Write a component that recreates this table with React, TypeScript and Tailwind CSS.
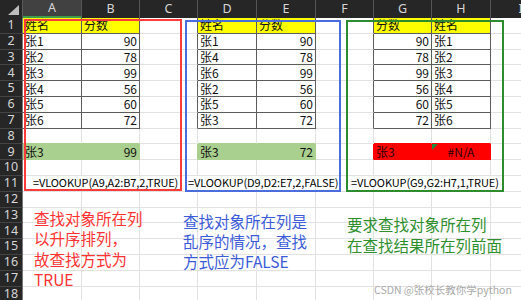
import React from 'react';

const W = ['w-[23px]', 'w-[59px]', 'w-[58px]', 'w-[58px]', 'w-[59px]', 'w-[59px]', 'w-[58px]', 'w-[58px]', 'w-[59px]', 'w-[60px]'];
const LET = ['A', 'B', 'C', 'D', 'E', 'F', 'G', 'H', 'I'];

type Fill = 'y' | 'g' | 'r';
type Cell = { t: string; a: 'l' | 'r' | 'c'; f?: Fill };
const cells: Record<string, Cell> = {};
function put(c: number, r: number, t: string, a: 'l' | 'r' | 'c' = 'l', f?: Fill) {
  cells[`${c}-${r}`] = { t, a, f };
}

put(1, 1, '姓名', 'l', 'y');
put(2, 1, '分数', 'l', 'y');
[['张1', '90'], ['张2', '78'], ['张3', '99'], ['张4', '56'], ['张5', '60'], ['张6', '72']].forEach(([n, v], i) => {
  put(1, i + 2, n);
  put(2, i + 2, v, 'r');
});
put(4, 1, '姓名', 'l', 'y');
put(5, 1, '分数', 'l', 'y');
[['张1', '90'], ['张4', '78'], ['张6', '99'], ['张2', '56'], ['张5', '60'], ['张3', '72']].forEach(([n, v], i) => {
  put(4, i + 2, n);
  put(5, i + 2, v, 'r');
});
put(7, 1, '分数', 'l', 'y');
put(8, 1, '姓名', 'l', 'y');
[['90', '张1'], ['78', '张2'], ['99', '张3'], ['56', '张4'], ['60', '张5'], ['72', '张6']].forEach(([v, n], i) => {
  put(7, i + 2, v, 'r');
  put(8, i + 2, n);
});
put(1, 9, '张3', 'l', 'g');
put(2, 9, '99', 'r', 'g');
put(4, 9, '张3', 'l', 'g');
put(5, 9, '72', 'r', 'g');
put(7, 9, '张3', 'l', 'r');
put(8, 9, '#N/A', 'c', 'r');

const TABLE_COLS = [1, 2, 4, 5, 7, 8];
const isTable = (c: number, r: number) => r >= 1 && r <= 7 && TABLE_COLS.includes(c);
const fillOf = (c: number, r: number): Fill | undefined => cells[`${c}-${r}`]?.f;

const FILL_BG: Record<Fill, string> = { y: 'bg-[#ffff00]', g: 'bg-[#a9d08e]', r: 'bg-[#ff0000]' };
const FILL_R: Record<Fill, string> = { y: 'border-r-[#ffff00]', g: 'border-r-[#a9d08e]', r: 'border-r-[#ff0000]' };
const FILL_B: Record<Fill, string> = { y: 'border-b-[#ffff00]', g: 'border-b-[#a9d08e]', r: 'border-b-[#ff0000]' };

function rightBorder(c: number, r: number) {
  if (isTable(c, r) || isTable(c + 1, r)) return 'border-r-[#5c5c5c]';
  const f = fillOf(c, r) || fillOf(c + 1, r);
  if (f) return FILL_R[f];
  return 'border-r-[#e2e2e2]';
}
function bottomBorder(c: number, r: number) {
  if (isTable(c, r) || isTable(c, r + 1)) return 'border-b-[#5c5c5c]';
  const f = fillOf(c, r) || fillOf(c, r + 1);
  if (f) return FILL_B[f];
  return 'border-b-[#e2e2e2]';
}

const CJK = "font-['Noto_Sans_CJK_SC','Noto_Sans',sans-serif]";

function Extra({ c, r }: { c: number; r: number }) {
  if (r === 11 && c === 1)
    return <span className="relative z-10 mb-[2px] ml-[8px] shrink-0 whitespace-nowrap bg-white text-[11px] leading-[12px] tracking-[-0.1px] text-black">=VLOOKUP(A9,A2:B7,2,TRUE)</span>;
  if (r === 11 && c === 3)
    return <span className="relative z-10 mb-[2px] ml-[46px] shrink-0 whitespace-nowrap bg-white text-[11px] leading-[12px] tracking-[-0.1px] text-black">=VLOOKUP(D9,D2:E7,2,FALSE)</span>;
  if (r === 11 && c === 6)
    return <span className="relative z-10 mb-[2px] ml-[33px] shrink-0 whitespace-nowrap bg-white text-[11px] leading-[12px] tracking-[-0.1px] text-black">=VLOOKUP(G9,G2:H7,1,TRUE)</span>;
  if (r === 13 && c === 1)
    return (
      <div className="relative z-10 shrink-0 self-start whitespace-nowrap pl-[9px] pt-[0px] text-[15.5px] leading-[20.5px] text-[#ff3333]">
        <div>查找对象所在列</div>
        <div>以升序排列，</div>
        <div>故查找方式为</div>
        <div>TRUE</div>
      </div>
    );
  if (r === 13 && c === 3)
    return (
      <div className="relative z-10 shrink-0 self-start whitespace-nowrap pl-[41px] pt-[3px] text-[15.5px] leading-[20px] text-[#3b5bd9]">
        <div>查找对象所在列是</div>
        <div>乱序的情况，查找</div>
        <div>方式应为FALSE</div>
      </div>
    );
  if (r === 13 && c === 6)
    return (
      <div className="relative z-10 shrink-0 self-start whitespace-nowrap pl-[29px] pt-[6px] text-[15.5px] leading-[21px] text-[#2f8f2f]">
        <div>要求查找对象所在列</div>
        <div>在查找结果所在列前面</div>
      </div>
    );
  return null;
}

export default function App() {
  const rows = Array.from({ length: 18 }, (_, i) => i + 1);
  return (
    <div className={`relative h-[300px] w-[521px] overflow-hidden bg-white ${CJK}`}>
      {/* column header */}
      <div className="flex h-[18px]">
        <div className={`${W[0]} flex shrink-0 items-end justify-end border-r border-r-[#5a5a5a] bg-[#262626] pb-[2px] pr-[2px]`}>
          <svg width="13" height="12" viewBox="0 0 13 12">
            <polygon points="1,11 12,11 12,1" fill="#bdbdbd" />
          </svg>
        </div>
        {LET.map((l, i) => (
          <div
            key={l}
            className={`${W[i + 1]} flex shrink-0 items-center justify-center border-r border-r-[#555555] font-['Noto_Sans',sans-serif] text-[12.5px] text-[#d6d6d6] ${
              i === 0 ? 'border-b-2 border-b-[#3f9c4c] bg-[#414141]' : 'bg-[#262626]'
            }`}
          >
            {l}
          </div>
        ))}
      </div>
      {rows.map((r) => (
        <div key={r} className="flex h-[15.8px]">
          <div className={`${W[0]} flex shrink-0 items-center justify-center border-b border-r border-b-[#444444] border-r-[#7a7a7a] bg-[#262626] font-['Noto_Sans',sans-serif] text-[12.5px] leading-none text-[#d6d6d6]`}>
            {r}
          </div>
          {LET.map((l, i) => {
            const c = i + 1;
            const cell = cells[`${c}-${r}`];
            const align = cell?.a === 'r' ? 'justify-end pr-[2px]' : cell?.a === 'c' ? 'justify-center' : 'justify-start pl-[2px]';
            return (
              <div
                key={l}
                className={`${W[c]} relative flex shrink-0 items-center border-b border-r ${rightBorder(c, r)} ${bottomBorder(c, r)} ${
                  cell?.f ? FILL_BG[cell.f] : ''
                } ${align} text-[12px] leading-none ${cell?.f === 'r' ? 'text-[#2a0000]' : 'text-[#111111]'}`}
              >
                {cell && <span className="whitespace-nowrap">{cell.t}</span>}
                {c === 8 && r === 9 && (
                  <svg className="absolute left-0 top-0" width="6" height="6" viewBox="0 0 6 6">
                    <polygon points="0,0 6,0 0,6" fill="#1e8a3c" />
                  </svg>
                )}
                <Extra c={c} r={r} />
              </div>
            );
          })}
        </div>
      ))}

      {/* highlight frames */}
      <div className="absolute left-[24px] top-[19px] h-[172px] w-[158px] border-2 border-[#ff3b3b]" />
      <div className="absolute left-[185px] top-[20px] h-[172px] w-[156px] border-2 border-[#4a6cdc]" />
      <div className="absolute left-[346px] top-[20px] h-[172px] w-[158px] border-2 border-[#2e8b2e]" />

      {/* watermark */}
      <div className="absolute left-[374px] top-[282px] whitespace-nowrap text-[10.5px] text-[#a9a9a9]">CSDN @张校长教你学python</div>
    </div>
  );
}
